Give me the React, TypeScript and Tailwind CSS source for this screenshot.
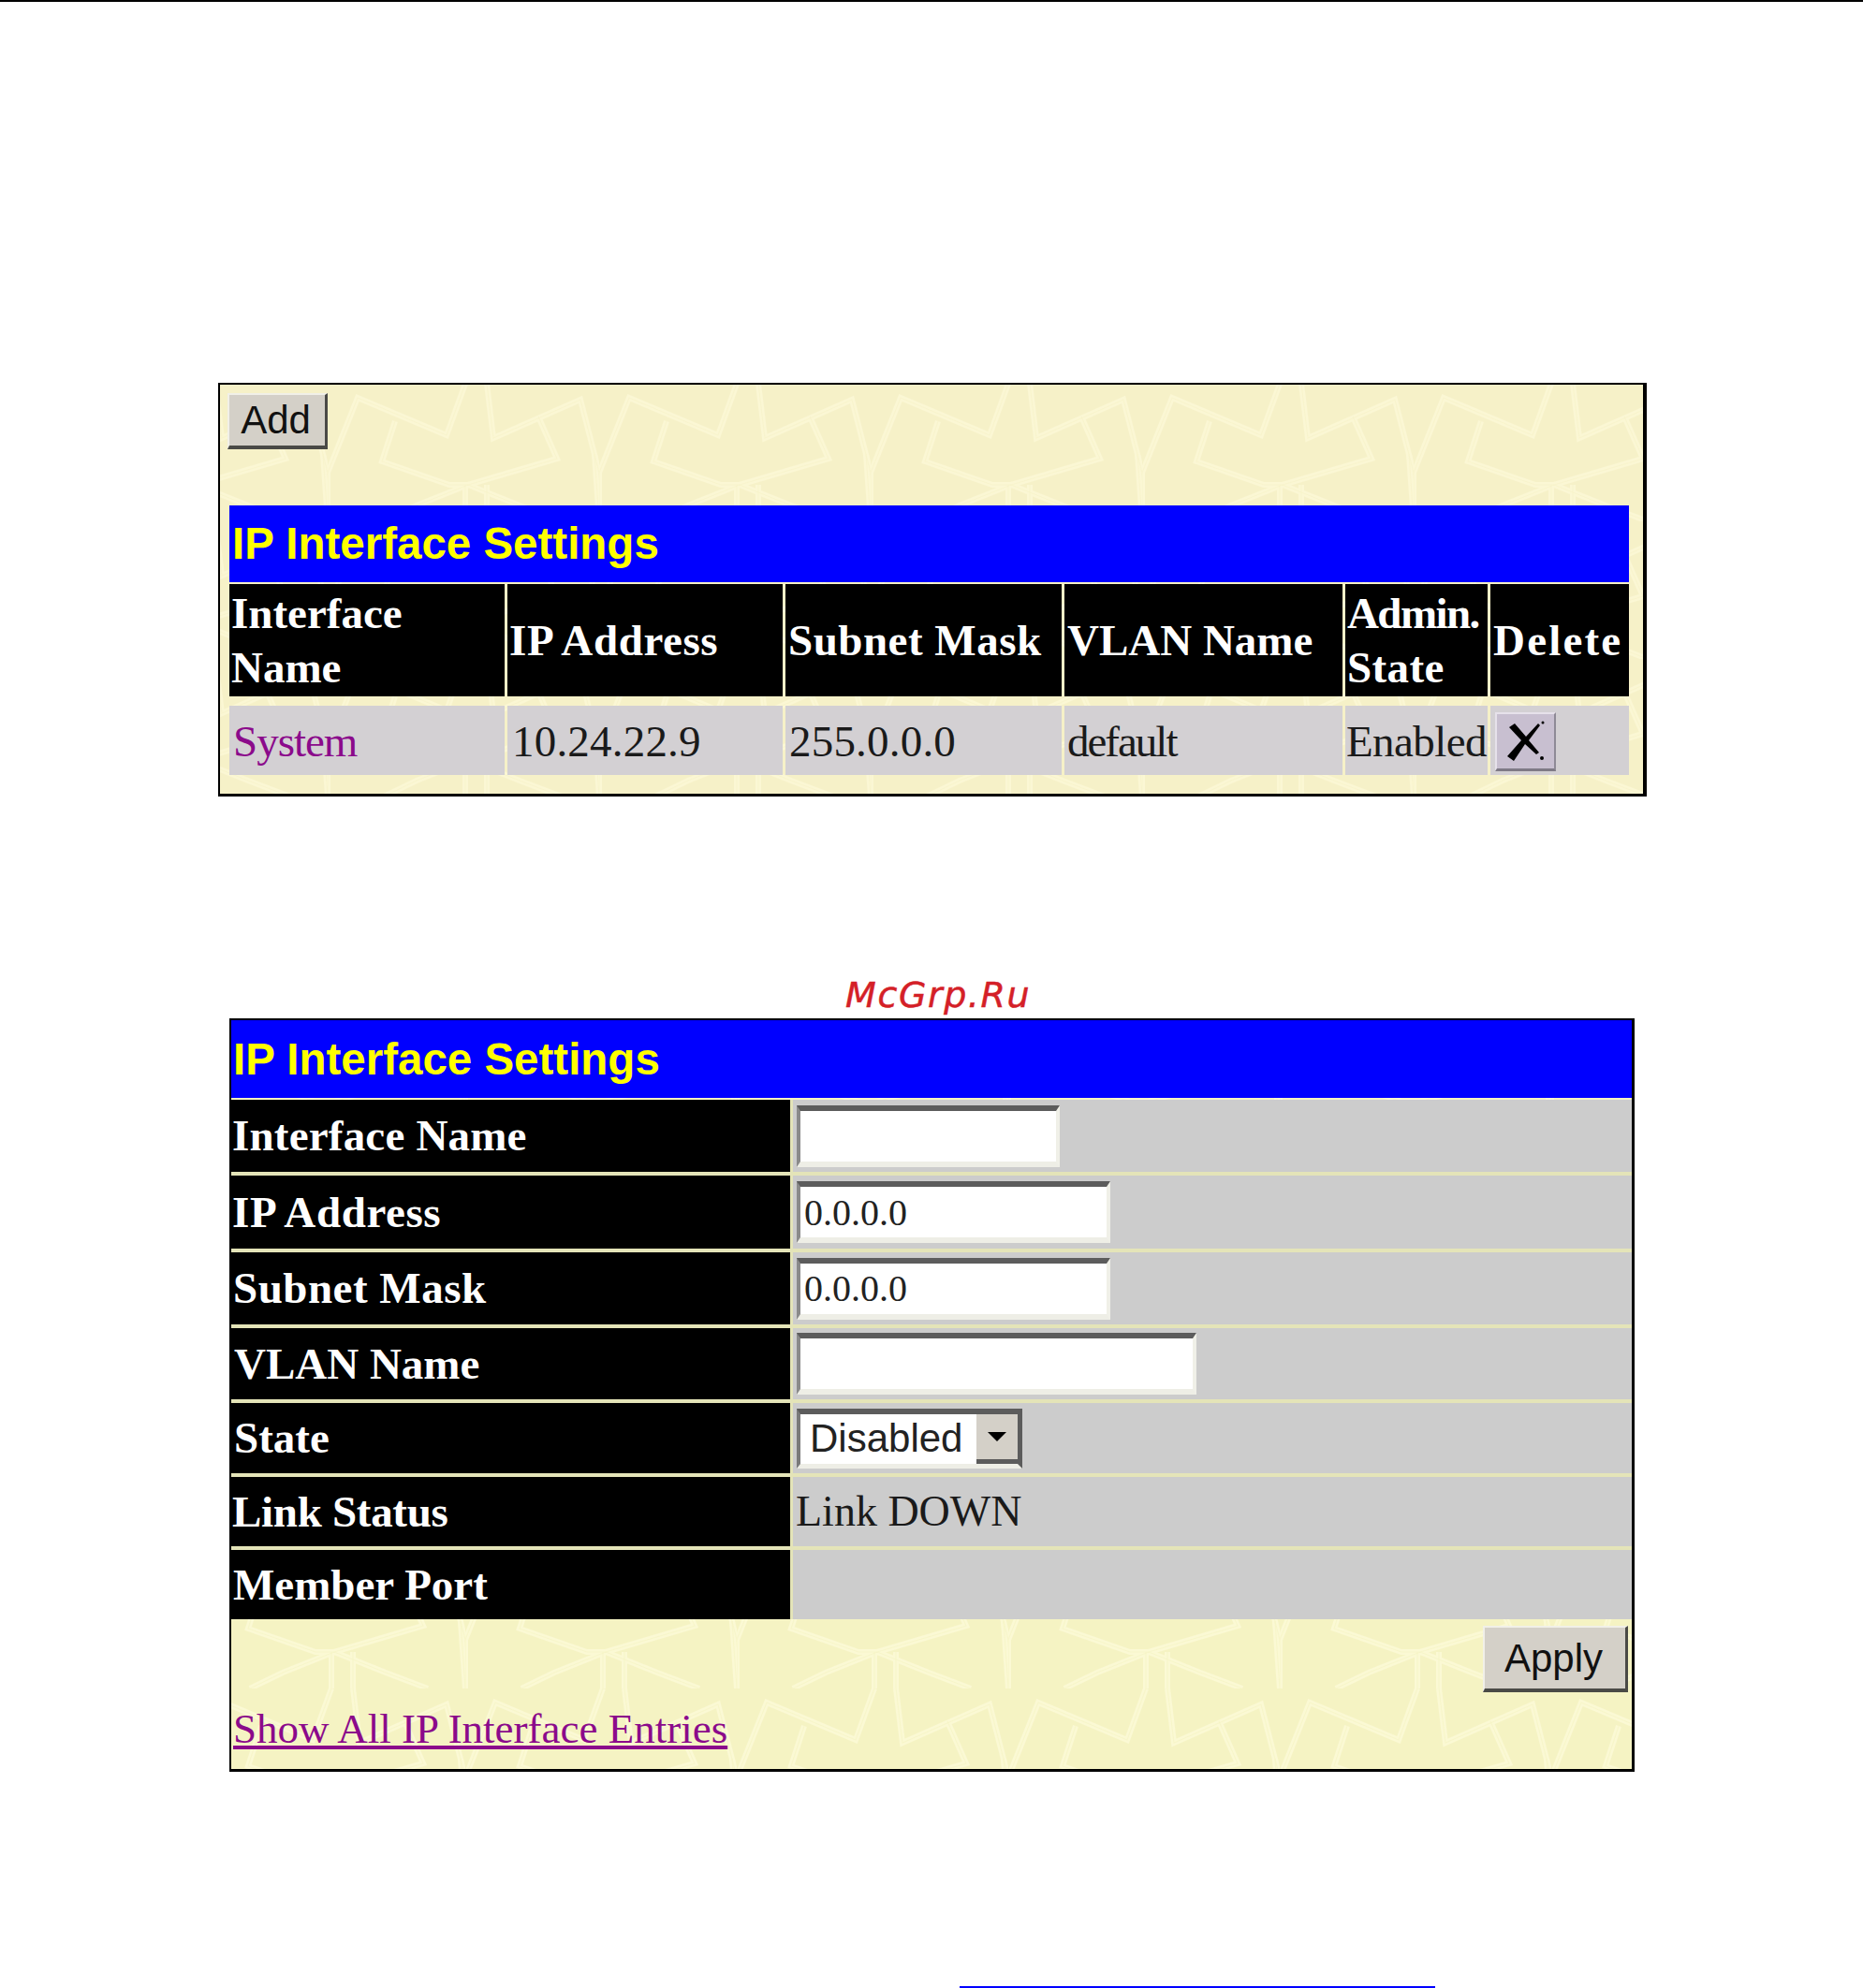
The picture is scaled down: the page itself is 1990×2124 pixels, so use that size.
const serif = "font-['Liberation_Serif','Times_New_Roman',serif]";
const sans = "font-['Liberation_Sans',Arial,sans-serif]";

// the faint woven wallpaper behind both panels
function Wallpaper({ id, x, y, base, line }: { id: string; x: number; y: number; base: string; line: string }) {
  const shapes = [
    "M0,95 L32,15 L127,55 L147,0",
    "M170,0 L177,58 L270,17 L290,95",
    "M72,40 L58,83 L130,108 L150,108 L245,80 L225,35",
    "M150,108 L95,130 L60,147",
    "M150,108 L205,130 L250,147",
    "M147,108 L147,147",
    "M170,108 L170,147",
    "M285,75 L290,147",
    "M0,95 L0,147",
  ];
  return (
    <svg className="absolute inset-0 h-full w-full" aria-hidden="true">
      <defs>
        <pattern id={id} width="290" height="147" patternUnits="userSpaceOnUse" patternTransform={`translate(${x} ${y})`}>
          {shapes.map((d) => (
            <path key={d} d={d} fill="none" stroke={line} strokeWidth="6" />
          ))}
          {shapes.map((d) => (
            <path key={d + "i"} d={d} fill="none" stroke={base} strokeWidth="1.2" opacity="0.6" />
          ))}
        </pattern>
      </defs>
      <rect width="100%" height="100%" fill={`url(#${id})`} />
    </svg>
  );
}

function Title({ pad }: { pad: string }) {
  return (
    <div className={`flex h-full items-center bg-[#0000ff] text-[47.5px] leading-none font-bold text-[#ffff00] ${sans} ${pad}`}>
      IP Interface Settings
    </div>
  );
}

function BevelButton({ label, className }: { label: string; className: string }) {
  return (
    <button
      type="button"
      className={`border-t-2 border-r-[3px] border-b-[4px] border-l-2 border-t-[#f1f0e8] border-r-[#4a4a46] border-b-[#4a4a46] border-l-[#f1f0e8] bg-[#d4d0c8] text-[42px] leading-none text-[#111] ${sans} ${className}`}
    >
      {label}
    </button>
  );
}

function SunkenInput({ value, width }: { value?: string; width: string }) {
  return (
    <input
      readOnly
      value={value ?? ""}
      className={`h-[66px] border-t-[6px] border-r-[4px] border-b-[6px] border-l-[4px] border-t-[#5c5c5c] border-r-[#f0f0e8] border-b-[#eeeee6] border-l-[#8a8a8a] bg-white pl-[4px] text-[40px] text-[#222] outline-none ${serif} ${width}`}
    />
  );
}

const headerCells = [
  { lines: [{ t: "Interface", track: "" }, { t: "Name", track: "" }], pad: "pl-[2px]" },
  { lines: [{ t: "IP Address", track: "tracking-[0.6px]" }], pad: "pl-[2px]" },
  { lines: [{ t: "Subnet Mask", track: "tracking-[0.5px]" }], pad: "pl-[3px]" },
  { lines: [{ t: "VLAN Name", track: "" }], pad: "pl-[3px]" },
  { lines: [{ t: "Admin.", track: "tracking-[-1.6px]" }, { t: "State", track: "tracking-[0.4px]" }], pad: "pl-[2px]" },
  { lines: [{ t: "Delete", track: "tracking-[2.2px]" }], pad: "pl-[3px]" },
];

const formRows = [
  { label: "Interface Name", cls: "h-[77px] pl-[1px] tracking-[0.2px]" },
  { label: "IP Address", cls: "h-[78px] pl-[1px] tracking-[0.6px]" },
  { label: "Subnet Mask", cls: "h-[77px] pl-[2px] tracking-[0.5px]" },
  { label: "VLAN Name", cls: "h-[76px] pl-[3px]" },
  { label: "State", cls: "h-[75px] pl-[3px]" },
  { label: "Link Status", cls: "h-[74px] pl-[1px] tracking-[-0.3px]" },
  { label: "Member Port", cls: "h-[74px] pl-[2px]" },
];

const tableCols = "grid-cols-[294px_294px_295px_297px_152px_148px]";

function EntriesPanel() {
  return (
    <section className="relative mt-[407px] ml-[233px] h-[442px] w-[1526px] border-t-2 border-r-4 border-b-[3px] border-l-2 border-black bg-[#f6f1c8]">
      <Wallpaper id="paper-a" x={115} y={-1} base="#f6f1c8" line="#fbf7d4" />
      <div className="relative flex flex-col pt-[9px] pl-[10px]">
        <BevelButton label="Add" className="-ml-[2px] h-[60px] w-[107px] pr-[3px]" />
        <div className="mt-[60px] h-[82px] w-[1495px]">
          <Title pad="pl-[3px]" />
        </div>
        <div className={`mt-[2px] grid w-[1495px] gap-x-[3px] ${tableCols}`}>
          {headerCells.map((cell) => (
            <div
              key={cell.lines[0].t}
              className={`flex h-[120px] flex-col justify-center bg-black text-[47px] leading-[58px] font-bold text-white ${serif} ${cell.pad}`}
            >
              {cell.lines.map((line) => (
                <span key={line.t} className={`whitespace-nowrap ${line.track}`}>
                  {line.t}
                </span>
              ))}
            </div>
          ))}
        </div>
        <div className={`mt-[10px] grid w-[1495px] gap-x-[3px] text-[47px] leading-none text-[#1a1a1a] ${tableCols} ${serif}`}>
          <div className="flex h-[74px] items-center bg-[#d3d0d3] pt-[2px] pl-[4px] tracking-[-1px] text-[#8b0a8b]">System</div>
          <div className="flex h-[74px] items-center bg-[#d3d0d3] pt-[2px] pl-[5px] tracking-[0.2px]">10.24.22.9</div>
          <div className="flex h-[74px] items-center bg-[#d3d0d3] pt-[2px] pl-[4px] tracking-[0.2px]">255.0.0.0</div>
          <div className="flex h-[74px] items-center bg-[#d3d0d3] pt-[2px] pl-[3px] tracking-[-2px]">default</div>
          <div className="flex h-[74px] items-center bg-[#d3d0d3] pt-[2px] pl-[1px] tracking-[-0.6px] whitespace-nowrap">Enabled</div>
          <div className="flex h-[74px] items-center bg-[#d3d0d3] pt-[2px] pl-[5px]">
            <button
              type="button"
              aria-label="Delete"
              className="h-[63px] w-[65px] border-t-2 border-r-2 border-b-[3px] border-l-2 border-t-[#e6e1ea] border-r-[#8f8a96] border-b-[#7f7a86] border-l-[#e6e1ea] bg-[#c8bfd0]"
            >
              <svg viewBox="0 0 61 58" className="h-full w-full">
                <path d="M13 14 L19 10 L31 24 L44 10 L46 12 L34 28 L45 41 L42 43 L30 32 L18 50 L11 45 L26 28 Z" fill="#000" />
                <circle cx="48" cy="47" r="2" fill="#000" />
                <circle cx="49" cy="9" r="1.5" fill="#000" />
              </svg>
            </button>
          </div>
        </div>
      </div>
    </section>
  );
}

function FormValue({ index }: { index: number }) {
  if (index === 0) return <SunkenInput width="w-[281px]" />;
  if (index === 1 || index === 2) return <SunkenInput value="0.0.0.0" width="w-[335px]" />;
  if (index === 3) return <SunkenInput width="w-[427px]" />;
  if (index === 4) {
    return (
      <div className="flex h-[64px] w-[241px] border-t-[6px] border-r-[5px] border-b-[5px] border-l-[4px] border-t-[#5c5c5c] border-r-[#5c5c5c] border-b-[#eeeee6] border-l-[#7a7a7a] bg-white">
        <span className={`flex flex-1 items-center pl-[10px] text-[42px] leading-none text-[#222] ${sans}`}>Disabled</span>
        <span className="flex w-[44px] items-center justify-center border-b-[5px] border-b-[#5c5c5c] bg-[#d4d0c8]">
          <svg viewBox="0 0 20 10" className="h-[10px] w-[20px]">
            <path d="M0 0 H20 L10 10 Z" fill="#000" />
          </svg>
        </span>
      </div>
    );
  }
  if (index === 5) return <span className={`-ml-[1px] text-[46px] leading-none text-[#1a1a1a] ${serif}`}>Link DOWN</span>;
  return null;
}

function FormPanel() {
  return (
    <section className="relative ml-[245px] h-[805px] w-[1501px] border-t-2 border-r-[3px] border-b-[3px] border-l-2 border-black bg-[#f5f3c3]">
      <Wallpaper id="paper-b" x={250} y={126} base="#f5f3c3" line="#fbf9d4" />
      <div className="relative flex flex-col">
        <div className="h-[83px]">
          <Title pad="pl-[2px]" />
        </div>
        <div className="mt-[2px] flex flex-col gap-y-[4px] bg-[#e4e4b8]">
          {formRows.map((row, i) => (
            <div key={row.label} className="grid grid-cols-[597px_1fr] gap-x-[3px]">
              <div className={`flex items-center bg-black text-[47px] leading-none font-bold whitespace-nowrap text-white ${serif} ${row.cls}`}>
                {row.label}
              </div>
              <div className="flex items-center bg-[#cccccc] pl-[4px]">
                <FormValue index={i} />
              </div>
            </div>
          ))}
        </div>
        <div className="flex flex-col pt-[7px]">
          <BevelButton label="Apply" className="mr-[4px] h-[71px] w-[155px] self-end pr-[3px]" />
          <a href="#" className={`mt-[14px] ml-[2px] w-fit text-[45px] leading-[50px] text-[#8b0a8b] underline ${serif}`}>
            Show All IP Interface Entries
          </a>
        </div>
      </div>
    </section>
  );
}

export default function App() {
  return (
    <div className="flex h-[2124px] w-[1990px] flex-col overflow-hidden bg-white">
      <div className="h-[2px] shrink-0 bg-black" />
      <EntriesPanel />
      <div className="mt-[188px] ml-[903px] h-[49px] font-['DejaVu_Sans',sans-serif] text-[38px] leading-[49px] tracking-[1.6px] text-[#d42027] italic [-webkit-text-stroke:0.5px_#d42027]">
        McGrp.Ru
      </div>
      <FormPanel />
      <div className="mt-[229px] ml-[1025px] h-[2px] w-[508px] shrink-0 bg-[#0000ff]" />
    </div>
  );
}
